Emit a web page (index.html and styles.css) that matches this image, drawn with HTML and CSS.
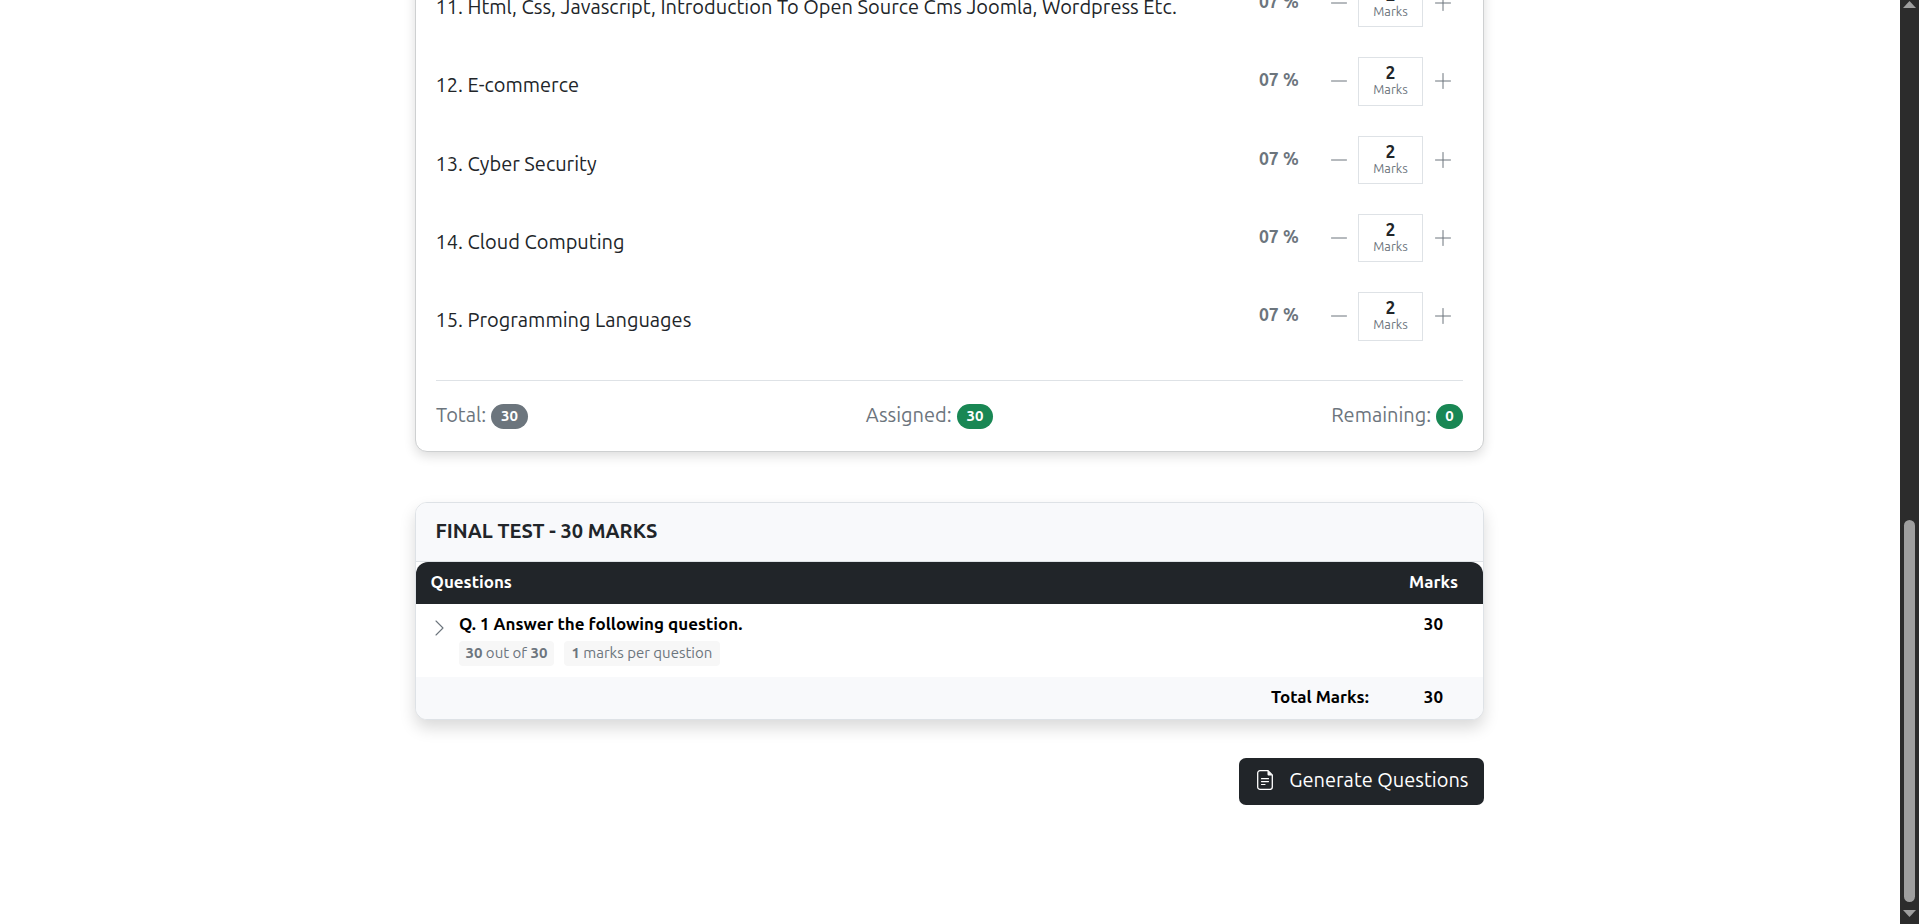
FILE: index.html
```html
<!DOCTYPE html>
<html lang="en">
<head>
<meta charset="utf-8">
<title>Final Test</title>
<link rel="stylesheet" href="styles.css">
</head>
<body>
<svg class="sprite" width="0" height="0">
  <symbol id="minus" viewBox="0 0 16 16"><path d="M.5 8h15" fill="none" stroke="currentColor" stroke-linecap="round"/></symbol>
  <symbol id="plus" viewBox="0 0 16 16"><path d="M.5 8h15M8 .5v15" fill="none" stroke="currentColor" stroke-linecap="round"/></symbol>
</svg>
<div class="page">
  <main class="content">
    <section class="card topics">
      <div class="row"><span class="label">11. Html, Css, Javascript, Introduction To Open Source Cms Joomla, Wordpress Etc.</span><span class="pct">07 %</span><svg class="step"><use href="#minus"/></svg><div class="box"><b>2</b><small>Marks</small></div><svg class="step"><use href="#plus"/></svg></div>
      <div class="row"><span class="label">12. E-commerce</span><span class="pct">07 %</span><svg class="step"><use href="#minus"/></svg><div class="box"><b>2</b><small>Marks</small></div><svg class="step"><use href="#plus"/></svg></div>
      <div class="row"><span class="label">13. Cyber Security</span><span class="pct">07 %</span><svg class="step"><use href="#minus"/></svg><div class="box"><b>2</b><small>Marks</small></div><svg class="step"><use href="#plus"/></svg></div>
      <div class="row"><span class="label">14. Cloud Computing</span><span class="pct">07 %</span><svg class="step"><use href="#minus"/></svg><div class="box"><b>2</b><small>Marks</small></div><svg class="step"><use href="#plus"/></svg></div>
      <div class="row"><span class="label">15. Programming Languages</span><span class="pct">07 %</span><svg class="step"><use href="#minus"/></svg><div class="box"><b>2</b><small>Marks</small></div><svg class="step"><use href="#plus"/></svg></div>
      <div class="totals">
        <div class="total"><span>Total:</span><span class="pill gray">30</span></div>
        <div class="total"><span>Assigned:</span><span class="pill">30</span></div>
        <div class="total"><span>Remaining:</span><span class="pill zero">0</span></div>
      </div>
    </section>

    <section class="card test">
      <h2 class="title">FINAL TEST - 30 MARKS</h2>
      <div class="thead"><span>Questions</span><span>Marks</span></div>
      <div class="question">
        <svg class="chevron" viewBox="0 0 9 16"><path d="M1 1l7 7-7 7" fill="none" stroke="currentColor" stroke-width="1.1" stroke-linecap="round" stroke-linejoin="round"/></svg>
        <div class="qbody">
          <div class="qtext">Q. 1 Answer the following question.</div>
          <div class="tags"><span class="tag"><b>30</b> out of <b>30</b></span><span class="tag"><b>1</b> marks per question</span></div>
        </div>
        <span class="num">30</span>
      </div>
      <div class="tfoot"><span>Total Marks:</span><span class="num">30</span></div>
    </section>

    <div class="actions">
      <button class="generate">
        <svg viewBox="0 0 16 20"><path d="M3 .7h8l4.300 4.300v12a2.300 2.300 0 0 1-2.300 2.300H3A2.300 2.300 0 0 1 .7 17V3A2.300 2.300 0 0 1 3 .7z" fill="none" stroke="#fff" stroke-width="1.300"/><path d="M10.500.7v3.600c0 .8.5 1.200 1.200 1.200h3.600z" fill="#fff"/><path d="M4.500 8.700h7M4.500 11.600h7M4.500 14.500h3.500" stroke="#fff" stroke-width="1.200" stroke-linecap="round"/></svg>
        <span>Generate Questions</span>
      </button>
    </div>
  </main>
  <aside class="scrollbar">
    <svg width="13" height="7" viewBox="0 0 13 7"><path d="M6.500 0L13 7H0z" fill="#9f9f9f"/></svg>
    <div class="thumb"></div>
    <svg width="13" height="7" viewBox="0 0 13 7"><path d="M0 0h13L6.500 7z" fill="#9f9f9f"/></svg>
  </aside>
</div>
</body>
</html>
```
FILE: styles.css
```css
* { box-sizing: border-box; }
body { margin: 0; height: 924px; overflow: hidden; background: #fff; color: #212529; font-family: Ubuntu, "Open Sans", sans-serif; font-size: 17px; }
.sprite { display: block; height: 0; }
.page { display: flex; height: 924px; }
.content { flex: 1; padding-left: 415px; }
.card { width: 1069px; border: 1px solid #dee2e6; border-radius: 12px; box-shadow: 0 8px 16px rgba(0, 0, 0, .15); background: #fff; }
.topics { margin-top: -50px; height: 502px; padding: 28px 20px 0; border-color: #ced0d1; box-shadow: 0 4px 12px rgba(0, 0, 0, .14); }
.row { display: flex; align-items: flex-start; height: 78.33px; white-space: nowrap; }
.label { flex: 1; padding-top: 8px; line-height: 40px; font-size: 20px; font-weight: 400; text-indent: -0.5px; }
.pct { width: 72px; line-height: 46px; font-size: 17.500px; font-weight: 600; color: #6c757d; }
.step { width: 16px; height: 16px; margin-top: 16px; color: #6c757d; }
.box { width: 65px; height: 48.330px; margin: 0 12px 0 11px; padding-top: 6px; border: 1px solid #dee2e6; display: flex; flex-direction: column; align-items: center; }
.box b { font-size: 17.500px; font-weight: 600; line-height: 18px; }
.box small { font-size: 12.750px; font-weight: 400; line-height: 14px; color: #6c757d; }
.row .step:last-child { margin-right: 12px; }
.totals { display: flex; justify-content: space-between; margin-top: 9px; padding-top: 23px; border-top: 1px solid #dee2e6; }
.total { display: flex; height: 25px; gap: 5px; color: #6c757d; font-size: 20px; font-weight: 400; line-height: 22px; }
.pill { height: 25px; padding: 0 9.750px; border-radius: 13px; background: #198754; color: #fff; font-size: 15px; font-weight: 700; line-height: 24px; }
.zero { padding: 0 9.200px; }
.gray { background: #6c757d; }

.test { margin-top: 50px; height: 218px; overflow: hidden; }
.title { margin: 0; height: 59px; padding: 0 19.500px; border-bottom: 1px solid #dee2e6; background: #f8f9fb; font-size: 20px; font-weight: 600; line-height: 56px; }
.thead { display: flex; justify-content: space-between; height: 42px; padding: 0 25px 0 14.500px; border-radius: 12px 12px 0 0; background: #212529; color: #fff; font-weight: 600; line-height: 40px; }
.question { display: flex; height: 73px; padding: 10px 40px 0 19px; color: #000; font-weight: 600; }
.chevron { width: 9px; height: 16px; margin: 6px 15px 0 0; color: #6c757d; }
.qbody { flex: 1; }
.qtext, .num { line-height: 20px; }
.tags { display: flex; gap: 10px; padding-top: 7px; }
.tag { height: 25px; padding: 0 6.500px; border-radius: 4px; background: #f7f7f7; color: #6c757d; font-size: 15px; font-weight: 400; line-height: 24px; white-space: nowrap; }
.tag + .tag { padding: 0 7.500px; }
.tag b { font-weight: 700; }
.tfoot { display: flex; justify-content: flex-end; gap: 55px; height: 42px; padding: 10px 40px 0; background: #f8f9fb; color: #000; font-weight: 600; line-height: 20px; }

.actions { display: flex; width: 1069px; justify-content: flex-end; padding-top: 38px; }
.generate { display: flex; width: 245px; height: 47px; padding: 12px 15px 0 18px; gap: 16.300px; border: 0; border-radius: 7px; background: #212529; color: #fff; font: 400 20px/20px Ubuntu, "Open Sans", sans-serif; white-space: nowrap; }
.generate svg { width: 16px; height: 20px; }

.scrollbar { display: flex; flex-direction: column; align-items: center; width: 19px; padding: 1px 0 7px; background: #2c2c2c; }
.thumb { width: 11px; height: 382px; margin: auto 0 8px; border-radius: 6px; background: #9f9f9f; }
```
